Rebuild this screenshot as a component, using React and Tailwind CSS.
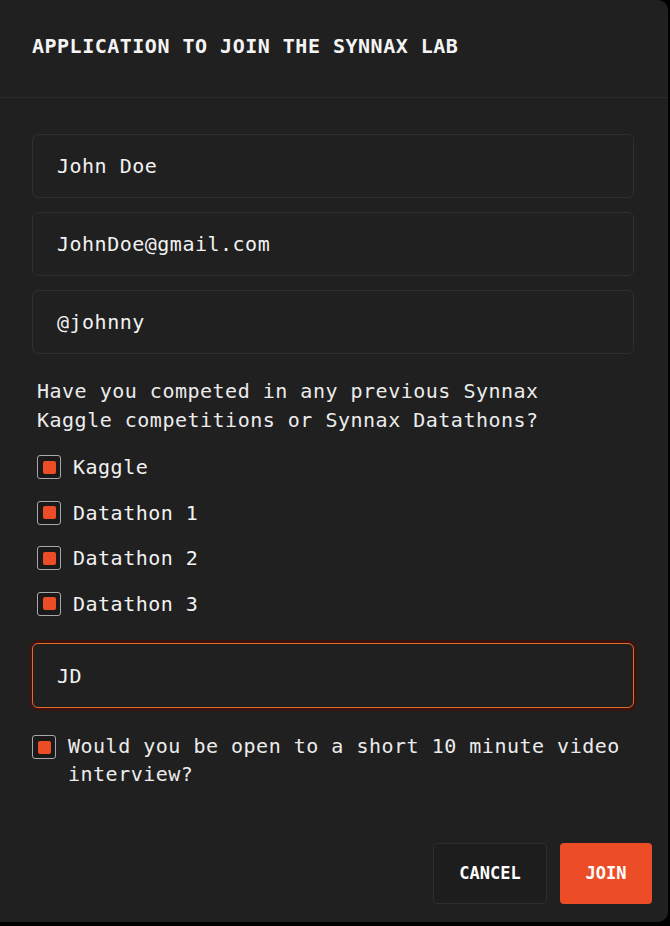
import React, { useState } from 'react';

const mono = { fontFamily: '"DejaVu Sans Mono", "Liberation Mono", monospace' };

const Check = ({ checked, onChange, className = '' }) => (
  <button
    type="button"
    onClick={onChange}
    className={`flex h-[24px] w-[24px] shrink-0 items-center justify-center rounded-[3px] border border-[#a8a8a8] bg-[#1a1a1a] ${className}`}
  >
    {checked && <span className="block h-[13px] w-[13px] rounded-[2px] bg-[#ec4d27]" />}
  </button>
);

const Field = ({ value, focused }) => (
  <div
    className={
      focused
        ? 'flex h-[65px] items-center rounded-[6px] border border-[#e8692a] px-[24px] shadow-[0_0_0_3px_#3a1510]'
        : 'flex h-[64px] items-center rounded-[6px] border border-[#2f2f2f] px-[24px]'
    }
  >
    <span className="text-[20px] tracking-[0.5px] text-[#f2f2f2]">{value}</span>
  </div>
);

export default function App() {
  const [comps, setComps] = useState({
    Kaggle: true,
    'Datathon 1': true,
    'Datathon 2': true,
    'Datathon 3': true
  });
  const [interview, setInterview] = useState(true);

  const toggle = (name) => setComps(prev => ({ ...prev, [name]: !prev[name] }));

  return (
    <div className="h-[926px] w-[670px] overflow-hidden bg-black" style={mono}>
      <div className="flex h-[922px] w-[668px] flex-col rounded-r-[10px] bg-[#202020]">
        <div className="flex h-[98px] items-center border-b border-[#2c2c2c] px-[32px] pb-[6px]">
          <h2 className="text-[20px] font-bold tracking-[0.5px] text-[#f4f4f4]">
            APPLICATION TO JOIN THE SYNNAX LAB
          </h2>
        </div>

        <div className="flex flex-col pl-[32px] pr-[34px] pt-[36px]">
          <div className="flex flex-col gap-[14px]">
            <Field value="John Doe" />
            <Field value="JohnDoe@gmail.com" />
            <Field value="@johnny" />
          </div>

          <p className="mt-[23px] w-[540px] pl-[5px] text-[20px] leading-[29px] tracking-[0.5px] text-[#ececec]">
            Have you competed in any previous Synnax Kaggle competitions or Synnax Datathons?
          </p>

          <div className="mt-[20px] flex flex-col gap-[21.5px] pl-[5px]">
            {Object.keys(comps).map(name => (
              <label key={name} className="flex h-[24px] items-center gap-[12px]">
                <Check checked={comps[name]} onChange={() => toggle(name)} />
                <span className="text-[20px] tracking-[0.5px] text-[#f2f2f2]">{name}</span>
              </label>
            ))}
          </div>

          <div className="mt-[27.5px]">
            <Field value="JD" focused />
          </div>

          <div className="mt-[24px] flex items-start gap-[12px]">
            <Check checked={interview} onChange={() => setInterview(!interview)} className="mt-[3px]" />
            <p className="text-[20px] leading-[28px] tracking-[0.5px] text-[#ececec]">
              Would you be open to a short 10 minute video interview?
            </p>
          </div>
        </div>

        <div className="mt-auto flex justify-end gap-[13px] pb-[18px] pr-[16px]">
          <button
            type="button"
            className="flex h-[61px] w-[114px] items-center justify-center rounded-[4px] border border-[#2e2e2e] bg-[#1d1d1d] text-[17px] font-bold text-white"
          >
            CANCEL
          </button>
          <button
            type="button"
            className="flex h-[61px] w-[92px] items-center justify-center rounded-[4px] bg-[#ec4d27] text-[17px] font-bold text-white"
          >
            JOIN
          </button>
        </div>
      </div>
    </div>
  );
}
